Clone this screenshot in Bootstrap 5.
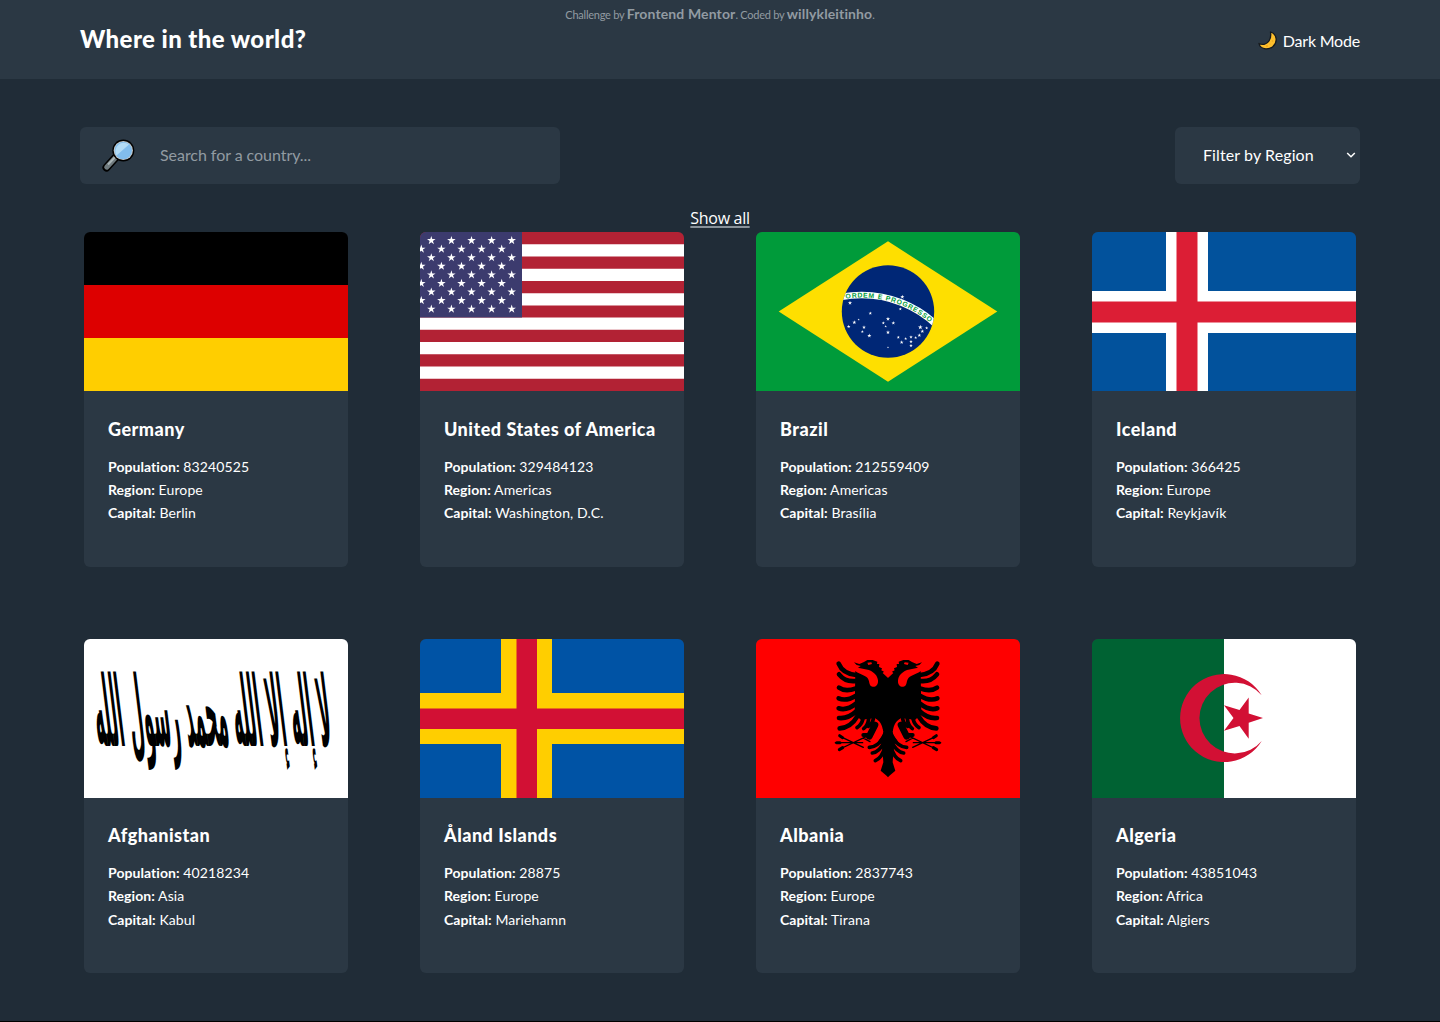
<!DOCTYPE html>
<html lang="en">
<head>
<meta charset="utf-8">
<meta name="viewport" content="width=device-width, initial-scale=1">
<title>Where in the world?</title>
<link rel="stylesheet" href="https://cdn.jsdelivr.net/npm/bootstrap@5.3.0/dist/css/bootstrap.min.css">
<style>
:root{--panel:#2b3844;--page:#202c37}
body{background:var(--page);color:#fff;font-family:Lato,"Open Sans",sans-serif;height:1022px;overflow:hidden;border-bottom:1px solid #000}
.topbar{background:var(--panel);height:79px;padding:0 80px}
.site-title{font-size:24px;font-weight:900;line-height:32px;letter-spacing:.42px;padding-bottom:2px}
.credit{top:4px;left:0;font-size:11px;line-height:20px;color:#929ba2;letter-spacing:-.25px}
.credit b{font-size:14px;letter-spacing:.13px}
.theme-btn{font-size:16px;line-height:24px;gap:6px;padding-top:2px;letter-spacing:-.2px}
.tools{padding:48px 80px 0}
.search-box{width:480px;height:57px;background:var(--panel);border-radius:6px;padding-left:22px}
.search-box input{background:none;border:0;outline:0;color:#fff;font-size:16px;padding:0 0 2px;margin-left:25px;width:350px;letter-spacing:-.05px}
.search-box input::placeholder{color:#929ba2;opacity:1}
.region-box{width:185px;height:57px;background:var(--panel);border-radius:6px;padding:0 4px 1px 28px;border:0;color:#fff;font-size:16px;letter-spacing:.1px}
.show-all{color:#fff;font:16px/24px "Open Sans",sans-serif;letter-spacing:-.3px;text-decoration-color:#89929a;text-decoration-thickness:2px;text-underline-offset:2px;margin-top:22px;height:26px}
.countries{display:grid;grid-template-columns:repeat(4,264px);column-gap:72px;row-gap:72px;padding:0 84px}
.country{background:var(--panel);border-radius:6px;height:334.5px;overflow:hidden}
.country>svg{display:block;width:264px;height:159px}
.country-info{padding:24.5px 24px 0}
.country-name{font-size:18px;font-weight:900;line-height:26px;margin:0 0 13px;letter-spacing:.5px}
.facts{font-size:14px;line-height:23.3px;margin:0;letter-spacing:.12px}
.facts b{font-weight:700;letter-spacing:.05px}
</style>
<script src="https://cdn.jsdelivr.net/npm/bootstrap@5.3.0/dist/js/bootstrap.bundle.min.js"></script>
</head>
<body>
<header class="topbar position-relative d-flex justify-content-between align-items-center">
  <h1 class="site-title m-0">Where in the world?</h1>
  <div class="credit position-absolute w-100 text-center">Challenge by <b>Frontend Mentor</b>. Coded by <b>willykleitinho</b>.</div>
  <div class="theme-btn d-flex align-items-center">
    <svg width="19" height="19" viewBox="0 0 19 19"><path d="M12.5 1C19 3 20 11 15 15.500 10 19.500 2 18 1 12.500 5 14.500 9 13 11 10 13 7 13 4 12.500 1Z" fill="#fdbf2d" stroke="#15191d" stroke-width="1.300" stroke-linejoin="round"/><g fill="#eda51e"><circle cx="14.500" cy="10" r=".8"/><circle cx="9" cy="15" r=".9"/><circle cx="12" cy="13" r=".6"/></g></svg>
    <span>Dark Mode</span>
  </div>
</header>
<main>
  <div class="tools d-flex justify-content-between">
    <label class="search-box d-flex align-items-center">
      <svg width="33" height="33" viewBox="0 0 33 33"><path d="M14.500 17.500 4.500 28.500" stroke="#000" stroke-width="8" stroke-linecap="round"/><path d="M14.500 17.500 4.700 28.200" stroke="#6f7a7e" stroke-width="5" stroke-linecap="round"/><path d="M14 17 6 25.500" stroke="#a9b4b6" stroke-width="2"/><circle cx="21.300" cy="11.500" r="11" fill="#000"/><circle cx="21.300" cy="11.500" r="9.600" fill="#c9c9c6"/><circle cx="21.300" cy="11.500" r="8.700" fill="#82bdec"/><path d="M14.500 16.500A8.500 8.500 0 0 1 27 5.500Z" fill="#b2dbf5"/></svg>
      <input type="text" placeholder="Search for a country...">
    </label>
    <button class="region-box d-flex align-items-center justify-content-between" type="button"><span>Filter by Region</span>
      <svg width="10" height="8" viewBox="0 0 10 8"><path d="M1.200 2 5 5.800 8.800 2" fill="none" stroke="#fff" stroke-width="1.500"/></svg></button>
  </div>
  <div class="d-flex justify-content-center"><a href="#" class="show-all">Show all</a></div>
  <section class="countries">
    <article class="country">
      <svg viewBox="0 0 264 159"><path d="M0 0h264v53H0z"/><path fill="#d00" d="M0 53h264v53H0z"/><path fill="#ffce00" d="M0 106h264v53H0z"/></svg>
      <div class="country-info"><h2 class="country-name">Germany</h2><p class="facts"><b>Population:</b> 83240525<br><b>Region:</b> Europe<br><b>Capital:</b> Berlin</p></div>
    </article>
    <article class="country">
      <svg viewBox="0 0 264 159"><defs><path id="st" d="M0-1 .2245-.309.951-.309.363.118.588.809 0 .382-.588.809-.363.118-.951-.309-.2245-.309Z"/>
        <g id="r5"><use href="#st" transform="translate(11.300) scale(4.500)"/><use href="#st" transform="translate(31.400) scale(4.500)"/><use href="#st" transform="translate(51.500) scale(4.500)"/><use href="#st" transform="translate(71.600) scale(4.500)"/><use href="#st" transform="translate(91.700) scale(4.500)"/></g></defs>
        <path fill="#fff" d="M0 12h264v147H0z"/><path stroke="#b22234" stroke-width="12.230" d="M0 6.115H264M0 30.577H264M0 55.038H264M0 79.500H264M0 103.960H264M0 128.420H264M0 152.880H264"/><path fill="#3c3b6e" d="M0 0h102v85.600H0z"/>
        <g fill="#fff"><use href="#r5" y="8.500"/><use href="#r5" x="-10" y="17.070"/><use href="#r5" y="25.640"/><use href="#r5" x="-10" y="34.210"/><use href="#r5" y="42.780"/><use href="#r5" x="-10" y="51.350"/><use href="#r5" y="59.920"/><use href="#r5" x="-10" y="68.490"/><use href="#r5" y="77.060"/></g></svg>
      <div class="country-info"><h2 class="country-name">United States of America</h2><p class="facts"><b>Population:</b> 329484123<br><b>Region:</b> Americas<br><b>Capital:</b> Washington, D.C.</p></div>
    </article>
    <article class="country">
      <svg viewBox="0 0 264 159"><defs><clipPath id="disc"><circle cx="132" cy="79.500" r="46.200"/></clipPath><path id="motto" d="M-.8 171.900a106.400 106.400 0 0 1 212.800 0"/></defs>
        <path fill="#009b3a" d="M0 0h264v159H0z"/><path fill="#fedf00" d="M22.700 79.500 132 9.300 241.300 79.500 132 149.700Z"/><circle cx="132" cy="79.500" r="46.200" fill="#002776"/>
        <circle cx="105.600" cy="171.900" r="108.900" fill="none" stroke="#fff" stroke-width="6.600" clip-path="url(#disc)"/>
        <text font-family="Liberation Sans" font-weight="700" font-size="6.800" fill="#009b3a" textLength="90" lengthAdjust="spacing"><textPath href="#motto" startOffset="151">ORDEM E PROGRESSO</textPath></text>
        <g fill="#fff" transform="translate(74 23) scale(.3333)"><use href="#st" transform="translate(60 144) scale(6.500)"/><use href="#st" transform="translate(121 175) scale(5.500)"/><use href="#st" transform="translate(73 202) scale(6.500)"/><use href="#st" transform="translate(86 194) scale(3.500)"/><use href="#st" transform="translate(56 215) scale(5.500)"/><use href="#st" transform="translate(102 217) scale(6)"/><use href="#st" transform="translate(97 230) scale(5)"/><use href="#st" transform="translate(118 242) scale(6.500)"/><use href="#st" transform="translate(174 192) scale(6.500)"/><use href="#st" transform="translate(160 204) scale(5)"/><use href="#st" transform="translate(190 204) scale(6)"/><use href="#st" transform="translate(167 214) scale(4)"/><use href="#st" transform="translate(174 232) scale(6.500)"/><use href="#st" transform="translate(217 126) scale(6.500)"/><use href="#st" transform="translate(211 162) scale(5)"/><use href="#st" transform="translate(205 247) scale(5)"/><use href="#st" transform="translate(227 251) scale(5)"/><use href="#st" transform="translate(215 262) scale(6)"/><use href="#st" transform="translate(243 246) scale(5.500)"/><use href="#st" transform="translate(243 260) scale(5.500)"/><use href="#st" transform="translate(243 272) scale(5.500)"/><use href="#st" transform="translate(257 248) scale(5)"/><use href="#st" transform="translate(268 241) scale(6)"/><use href="#st" transform="translate(277 229) scale(6)"/><use href="#st" transform="translate(271 217) scale(7.500)"/><use href="#st" transform="translate(290 219) scale(5)"/><use href="#st" transform="translate(174 277) scale(3)"/></g></svg>
      <div class="country-info"><h2 class="country-name">Brazil</h2><p class="facts"><b>Population:</b> 212559409<br><b>Region:</b> Americas<br><b>Capital:</b> Brasília</p></div>
    </article>
    <article class="country">
      <svg viewBox="0 0 264 159"><path fill="#02529c" d="M0 0h264v159H0z"/><path fill="#fff" d="M74 0h42v159H74zM0 59h264v42H0z"/><path fill="#dc1e35" d="M84.500 0h21v159h-21zM0 69.500h264v21H0z"/></svg>
      <div class="country-info"><h2 class="country-name">Iceland</h2><p class="facts"><b>Population:</b> 366425<br><b>Region:</b> Europe<br><b>Capital:</b> Reykjavík</p></div>
    </article>
    <article class="country">
      <svg viewBox="0 0 264 159"><path fill="#fff" d="M0 0h264v159H0z"/>
        <text transform="translate(132 107) skewX(7) scale(1 2.450)" font-family="DejaVu Sans" font-weight="700" font-size="40" direction="rtl" text-anchor="middle" textLength="236" lengthAdjust="spacingAndGlyphs">لا إله إلا الله محمد رسول الله</text></svg>
      <div class="country-info"><h2 class="country-name">Afghanistan</h2><p class="facts"><b>Population:</b> 40218234<br><b>Region:</b> Asia<br><b>Capital:</b> Kabul</p></div>
    </article>
    <article class="country">
      <svg viewBox="0 0 264 159"><path fill="#0053a5" d="M0 0h264v159H0z"/><path fill="#ffce00" d="M81 0h51v159H81zM0 54h264v51H0z"/><path fill="#d21034" d="M96.500 0h20.500v159H96.500zM0 69.500h264V90H0z"/></svg>
      <div class="country-info"><h2 class="country-name">Åland Islands</h2><p class="facts"><b>Population:</b> 28875<br><b>Region:</b> Europe<br><b>Capital:</b> Mariehamn</p></div>
    </article>
    <article class="country">
      <svg viewBox="0 0 264 159"><path fill="red" d="M0 0h264v159H0z"/>
        <defs><g id="wing"><path d="M205 100 188 84 192 80 184 76 186 70 177 66 178 57 171 57 172 50 158 45 142 45 132 51 118 57 102 52 110 60 122 63 114 68 132 72C152 74 172 86 174 106 175 119 168 126 158 125 145 123 150 106 142 98 133 90 118 88 106 78L104 206 122 224 165 220C180 228 187 240 189 258L187 310 190 352 182 377 205 397Z"/>
          <g fill="none" stroke="#000" stroke-linecap="round"><path stroke-width="14" d="M56 56Q68 86 108 90M57 88Q76 112 108 108M57 128Q76 142 108 130M56 160Q78 170 108 152M56 190Q80 198 108 176M57 219Q84 222 110 198M59 250Q92 248 112 214"/><path stroke-width="11" d="M111 248Q124 240 129 222M131 251Q143 242 146 222M145 244Q156 238 160 222M148 307Q172 306 190 278M157 324Q178 322 192 292M166 347Q186 338 194 308"/><path stroke-width="20" d="M165 240Q156 258 148 274"/><path stroke-width="12" d="M130 270 150 270M180 290 192 270"/><path stroke-width="4" d="M140 274 60 312M130 307 60 274M128 293H46M132 280 150 290"/><path stroke-width="9" d="M59 272 68 278M50 293H60M58 314 68 308"/></g>
          <path fill="red" d="M142 53 154 52 156 57 145 60ZM185 251Q170 254 161 276 164 292 174 288 188 272 190 260 189 252 185 251Z"/></g></defs>
        <g transform="translate(64 6) scale(.3333)"><use href="#wing"/><use href="#wing" transform="translate(408 0) scale(-1 1)"/></g></svg>
      <div class="country-info"><h2 class="country-name">Albania</h2><p class="facts"><b>Population:</b> 2837743<br><b>Region:</b> Europe<br><b>Capital:</b> Tirana</p></div>
    </article>
    <article class="country">
      <svg viewBox="0 0 264 159"><path fill="#006233" d="M0 0h132v159H0z"/><path fill="#fff" d="M132 0h132v159H132z"/><path fill="#d21034" d="M169.700 56.300A44 44 0 1 0 169.700 101.900 35.300 35.300 0 1 1 169.700 56.300ZM171 79 156.700 74.400V58.500L147.500 71 132 66.300 141.500 79 132 91.700 147.500 87 156.700 99.700V83.800Z"/></svg>
      <div class="country-info"><h2 class="country-name">Algeria</h2><p class="facts"><b>Population:</b> 43851043<br><b>Region:</b> Africa<br><b>Capital:</b> Algiers</p></div>
    </article>
  </section>
</main>
</body>
</html>
